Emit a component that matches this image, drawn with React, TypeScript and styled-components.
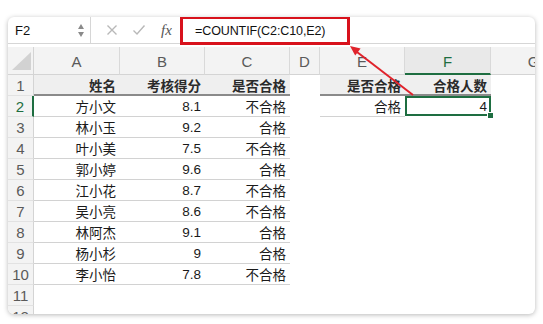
import React from "react";
import styled, { createGlobalStyle } from "styled-components";

const Global = createGlobalStyle`
  html, body { margin: 0; padding: 0; background: #ffffff; }
  body { font-family: "Liberation Sans", "Noto Sans CJK SC", sans-serif; }
`;

const Page = styled.div`
  width: 543px;
  height: 324px;
  box-sizing: border-box;
  padding: 17px 0 0 8px;
  overflow: hidden;
`;

const Card = styled.div`
  position: relative;
  width: 527px;
  height: 297px;
  background: #fff;
  border-radius: 6px;
  overflow: hidden;
  box-shadow: 0 1px 5px rgba(0, 0, 0, 0.28);
  display: flex;
  flex-direction: column;
`;

const FormulaBar = styled.div`
  height: 27px;
  flex: none;
  box-sizing: border-box;
  border-bottom: 1px solid #d6d6d6;
  display: flex;
  align-items: stretch;
`;

const NameBox = styled.div`
  width: 83px;
  box-sizing: border-box;
  border-right: 1px solid #d6d6d6;
  display: flex;
  align-items: center;
  justify-content: space-between;
  padding: 0 6px 0 7px;
  font-size: 13px;
  color: #111;
`;

const Spinner = styled.div`
  display: flex;
  flex-direction: column;
  gap: 3px;
  align-items: center;
`;

const Tri = styled.div<{ $down?: boolean }>`
  width: 0;
  height: 0;
  border-left: 3.5px solid transparent;
  border-right: 3.5px solid transparent;
  ${(p) =>
    p.$down
      ? "border-top: 5px solid #8a8a8a;"
      : "border-bottom: 5px solid #8a8a8a;"}
`;

const Tools = styled.div`
  width: 89px;
  display: flex;
  align-items: center;
  padding-left: 15px;
  box-sizing: border-box;
  gap: 14px;
`;

const Fx = styled.span`
  font-family: "Liberation Serif", serif;
  font-style: italic;
  font-size: 15px;
  color: #555;
  margin-left: 1px;
`;

const FormulaArea = styled.div`
  flex: 1;
  display: flex;
  align-items: stretch;
`;

const RedBox = styled.div`
  width: 170px;
  margin-top: -1px;
  height: 29px;
  box-sizing: border-box;
  border: 3px solid #d8121c;
  display: flex;
  align-items: center;
  padding-left: 12px;
  font-size: 12.5px;
  color: #111;
  letter-spacing: -0.1px;
`;

const Gap = styled.div`
  height: 3px;
  flex: none;
`;

const Sheet = styled.div`
  display: grid;
  grid-template-columns: 26px 86px 85px 85px 30px 85px 86px 86px;
  grid-template-rows: 28px repeat(12, 21px);
`;

const Corner = styled.div`
  background: #f3f3f3;
  border-right: 1px solid #d4d4d4;
  border-bottom: 1px solid #d4d4d4;
  position: relative;
  &::after {
    content: "";
    position: absolute;
    right: 2px;
    bottom: 4px;
    width: 0;
    height: 0;
    border-left: 19px solid transparent;
    border-bottom: 18px solid #d2d2d2;
  }
`;

const ColHead = styled.div<{ $sel?: boolean }>`
  background: ${(p) => (p.$sel ? "#e9e9e9" : "#f3f3f3")};
  border-right: 1px solid #d9d9d9;
  border-bottom: ${(p) => (p.$sel ? "2px solid #1e6e41" : "1px solid #d4d4d4")};
  box-sizing: border-box;
  display: flex;
  align-items: center;
  justify-content: center;
  font-size: 15px;
  color: ${(p) => (p.$sel ? "#1e6e41" : "#5a5a5a")};
  padding-top: 2px;
`;

const RowHead = styled.div<{ $sel?: boolean }>`
  background: #f3f3f3;
  box-sizing: border-box;
  border-right: ${(p) => (p.$sel ? "2px solid #1e6e41" : "1px solid #d4d4d4")};
  border-bottom: 1px solid #e2e2e2;
  display: flex;
  align-items: center;
  justify-content: center;
  font-size: 15px;
  color: ${(p) => (p.$sel ? "#1e6e41" : "#5a5a5a")};
`;

const Cell = styled.div<{ $head?: boolean; $line?: boolean; $sel?: boolean }>`
  position: relative;
  box-sizing: border-box;
  display: flex;
  align-items: center;
  justify-content: flex-end;
  padding-right: 4px;
  font-size: 13.5px;
  color: ${(p) => (p.$head ? "#2b2b2b" : "#1a1a1a")};
  white-space: nowrap;
  background: ${(p) => (p.$head ? "#efefef" : "transparent")};
  font-weight: ${(p) => (p.$head ? 700 : 400)};
  border-bottom: ${(p) =>
    p.$head ? "2px solid #8a8a8a" : p.$line ? "1px solid #d2d2d2" : "1px solid transparent"};
  box-shadow: ${(p) => (p.$sel ? "inset 0 0 0 2px #1e6e41" : "none")};
`;

const Handle = styled.div`
  position: absolute;
  right: -3px;
  bottom: -3px;
  width: 5px;
  height: 5px;
  background: #1e6e41;
  border: 1px solid #fff;
`;

const ArrowLayer = styled.svg`
  position: absolute;
  left: 0;
  top: 0;
  pointer-events: none;
`;

const cols = ["A", "B", "C", "D", "E", "F", "G"];

const data: string[][] = [
  ["姓名", "考核得分", "是否合格", "", "是否合格", "合格人数", ""],
  ["方小文", "8.1", "不合格", "", "合格", "4", ""],
  ["林小玉", "9.2", "合格"],
  ["叶小美", "7.5", "不合格"],
  ["郭小婷", "9.6", "合格"],
  ["江小花", "8.7", "不合格"],
  ["吴小亮", "8.6", "不合格"],
  ["林阿杰", "9.1", "合格"],
  ["杨小杉", "9", "合格"],
  ["李小怡", "7.8", "不合格"],
  [],
  [],
];

export default function App() {
  return (
    <>
      <Global />
      <Page>
        <Card>
          <FormulaBar>
            <NameBox>
              <span>F2</span>
              <Spinner>
                <Tri />
                <Tri $down />
              </Spinner>
            </NameBox>
            <Tools>
              <svg width="12" height="12" viewBox="0 0 12 12">
                <path d="M1.5 1.5 L10.5 10.5 M10.5 1.5 L1.5 10.5" stroke="#b8b8b8" strokeWidth="1.4" fill="none" />
              </svg>
              <svg width="14" height="12" viewBox="0 0 14 12">
                <path d="M1.5 6.5 L5 10 L12.5 1.5" stroke="#b8b8b8" strokeWidth="1.4" fill="none" />
              </svg>
              <Fx>fx</Fx>
            </Tools>
            <FormulaArea>
              <RedBox>=COUNTIF(C2:C10,E2)</RedBox>
            </FormulaArea>
          </FormulaBar>
          <Gap />
          <Sheet>
            <Corner />
            {cols.map((c) => (
              <ColHead key={c} $sel={c === "F"}>
                {c}
              </ColHead>
            ))}
            {data.map((row, r) => {
              const rn = r + 1;
              return (
                <React.Fragment key={rn}>
                  <RowHead $sel={rn === 2}>{rn}</RowHead>
                  {cols.map((c, ci) => {
                    const v = row[ci] ?? "";
                    const inTable = ci <= 2 && rn <= 10;
                    const inLookup = (ci === 4 || ci === 5) && rn <= 2;
                    const head = rn === 1 && (inTable || inLookup);
                    const line = !head && (inTable || (ci === 4 && rn === 2));
                    const sel = ci === 5 && rn === 2;
                    return (
                      <Cell key={c} $head={head} $line={line} $sel={sel}>
                        {v}
                        {sel && <Handle />}
                      </Cell>
                    );
                  })}
                </React.Fragment>
              );
            })}
          </Sheet>
          <ArrowLayer width="527" height="297" viewBox="0 0 527 297">
            <line x1="405" y1="78" x2="349" y2="35" stroke="#e0232b" strokeWidth="2" />
            <polygon points="342,29 352.6,31.6 347.2,38.6" fill="#e0232b" />
          </ArrowLayer>
        </Card>
      </Page>
    </>
  );
}
